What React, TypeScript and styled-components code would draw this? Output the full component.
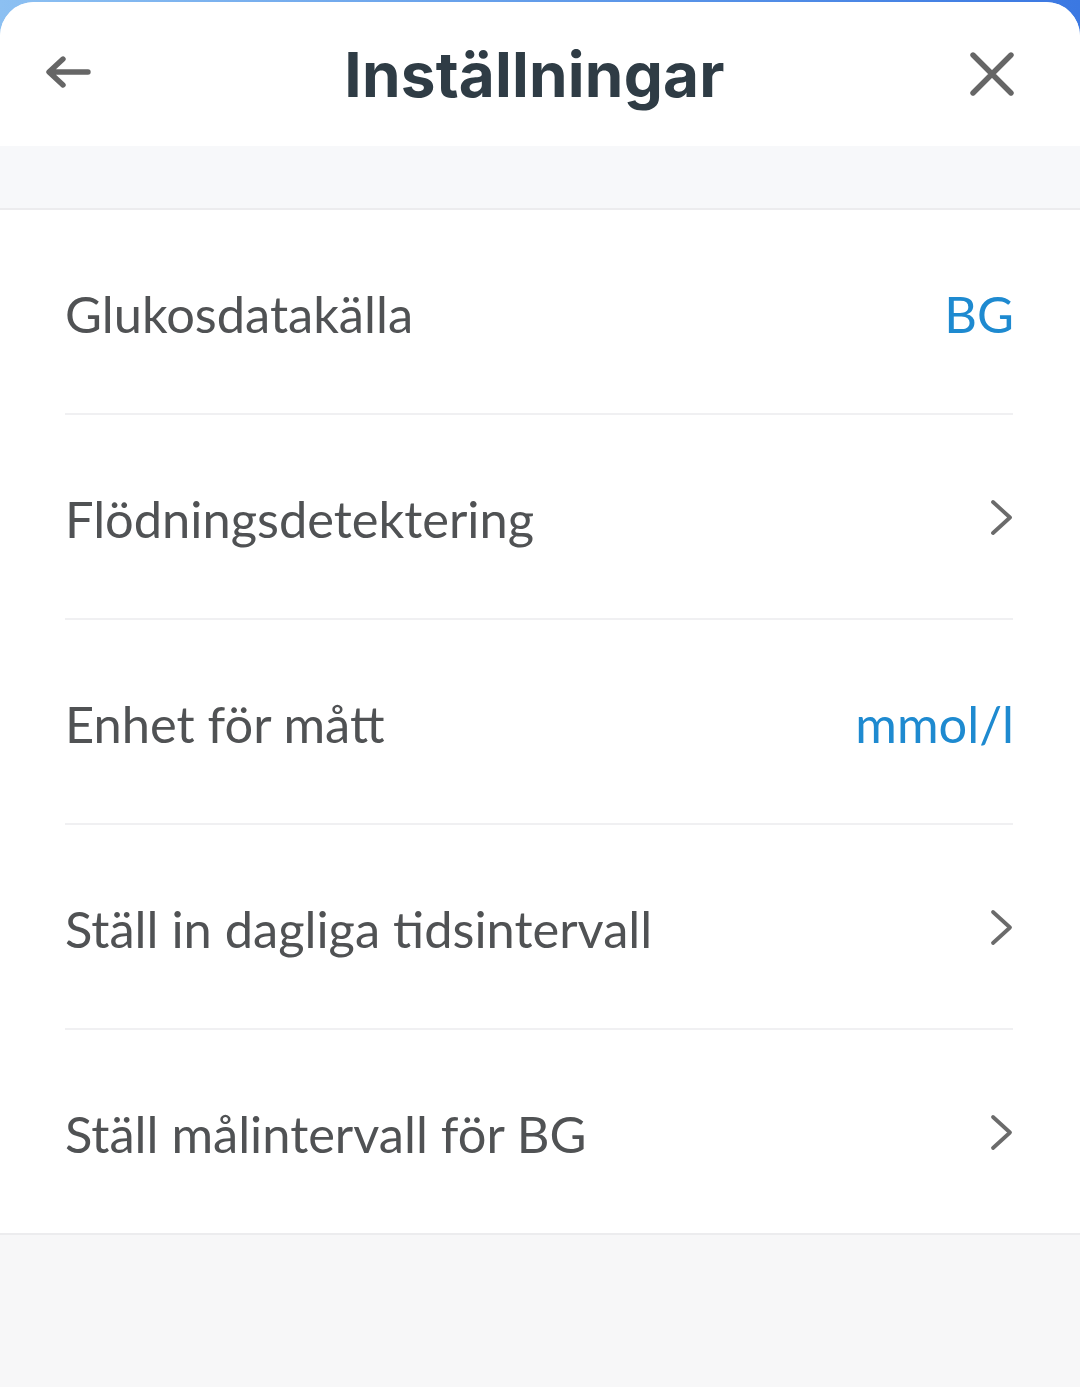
import React from "react";
import styled, { createGlobalStyle } from "styled-components";

const Global = createGlobalStyle`
  html, body { margin: 0; padding: 0; }
  body {
    background: linear-gradient(90deg, #8cc0f2 0%, #5a95e8 60%, #3b78e2 100%);
    font-family: Lato, "Noto Sans", sans-serif;
  }
`;

const Page = styled.div`
  margin-top: 2px;
  min-height: 1385px;
  background: #f7f7f8;
  border-radius: 34px 34px 0 0;
  overflow: hidden;
  display: flex;
  flex-direction: column;
`;

const Header = styled.header`
  height: 144px;
  background: #ffffff;
  display: grid;
  grid-template-columns: 140px 1fr 140px;
  align-items: center;
`;

const IconButton = styled.button<{ $align: "start" | "end" }>`
  border: 0;
  background: none;
  padding: 0;
  display: flex;
  justify-content: ${(p) => (p.$align === "start" ? "flex-start" : "flex-end")};
  padding-left: ${(p) => (p.$align === "start" ? "44px" : "0")};
  padding-right: ${(p) => (p.$align === "end" ? "66px" : "0")};
  cursor: pointer;
`;

const Title = styled.h1`
  margin: 0;
  text-align: center;
  font-family: Inter, Roboto, sans-serif;
  font-weight: 700;
  font-size: 62px;
  color: #2f3c45;
  letter-spacing: 0.2px;
  padding-right: 11px;
  padding-bottom: 0;
`;

const Spacer = styled.div`
  height: 62px;
  background: #f7f8fa;
  border-bottom: 2px solid #ececee;
`;

const List = styled.div`
  background: #ffffff;
  border-bottom: 2px solid #ececee;
`;

const Row = styled.div<{ $last?: boolean }>`
  height: 203px;
  margin: 0 67px 0 65px;
  display: flex;
  align-items: center;
  justify-content: space-between;
  border-bottom: ${(p) => (p.$last ? "0" : "2px solid #f0f0f2")};
`;

const Label = styled.span`
  font-family: Lato, sans-serif;
  font-size: 50.6px;
  color: #505254;
  padding-top: 4px;
`;

const Value = styled.span`
  font-family: Lato, sans-serif;
  font-size: 50.6px;
  color: #1e8ad0;
  padding-top: 4px;
  margin-right: -1px;
`;

const Chevron = () => (
  <svg width="26" height="40" viewBox="0 0 26 40" style={{ marginRight: -2 }}>
    <path d="M4 5 L21 20.5 L4 36" fill="none" stroke="#6b6b6b" strokeWidth="3.8" strokeLinecap="round" strokeLinejoin="round" />
  </svg>
);

const BackArrow = () => (
  <svg width="48" height="36" viewBox="0 0 48 36">
    <path d="M44 16 H6 M19 3 L5 16 L19 29" fill="none" stroke="#666666" strokeWidth="5.4" strokeLinecap="round" strokeLinejoin="round" />
  </svg>
);

const CloseIcon = () => (
  <svg width="44" height="44" viewBox="0 0 44 44">
    <path d="M3 3 L41 41 M41 3 L3 41" fill="none" stroke="#666666" strokeWidth="5.4" strokeLinecap="round" />
  </svg>
);

type Item = { label: string; value?: string };

const items: Item[] = [
  { label: "Glukosdatakälla", value: "BG" },
  { label: "Flödningsdetektering" },
  { label: "Enhet för mått", value: "mmol/l" },
  { label: "Ställ in dagliga tidsintervall" },
  { label: "Ställ målintervall för BG" },
];

export default function App() {
  return (
    <>
      <Global />
      <Page>
        <Header>
          <IconButton $align="start" aria-label="Tillbaka">
            <BackArrow />
          </IconButton>
          <Title>Inställningar</Title>
          <IconButton $align="end" aria-label="Stäng">
            <CloseIcon />
          </IconButton>
        </Header>
        <Spacer />
        <List>
          {items.map((it, i) => (
            <Row key={it.label} $last={i === items.length - 1}>
              <Label>{it.label}</Label>
              {it.value ? <Value>{it.value}</Value> : <Chevron />}
            </Row>
          ))}
        </List>
      </Page>
    </>
  );
}
